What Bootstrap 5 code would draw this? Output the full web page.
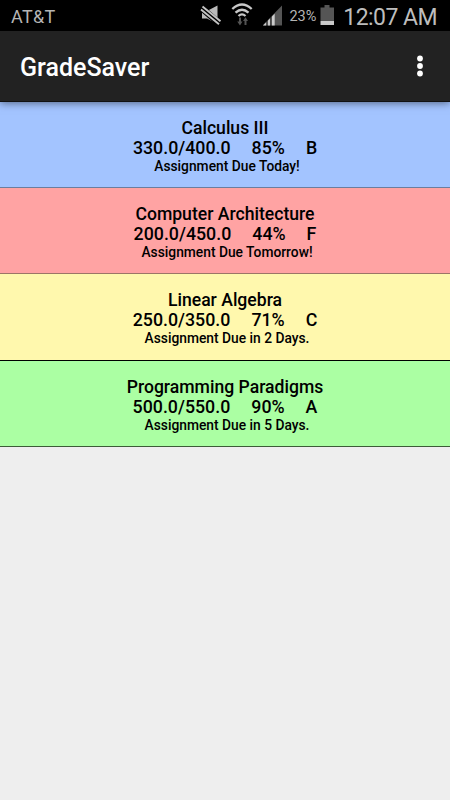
<!DOCTYPE html>
<html lang="en">
<head>
<meta charset="utf-8">
<meta name="viewport" content="width=device-width, initial-scale=1">
<title>GradeSaver</title>
<link href="https://cdn.jsdelivr.net/npm/bootstrap@5.3.0/dist/css/bootstrap.min.css" rel="stylesheet">
<style>
body{font-family:Roboto,"Liberation Sans",sans-serif;background:#eee;color:#000;height:800px;overflow:hidden}
.status{height:31px;background:#000;color:#b5b5b5;padding:0 13px 0 11px}
.carrier{font-size:18px;line-height:33px;letter-spacing:.3px}
.pct{font-size:14.5px;line-height:34px;margin-left:7px}
.clock{font-size:23px;line-height:35px;margin-left:9px;color:#bebebe;letter-spacing:-.55px}
.appbar{height:71px;background:#222;border-bottom:1px solid #111;padding:2px 12px 0 20px;box-shadow:0 1px 8px rgba(0,0,0,.5);z-index:2}
.title{font-size:25px;font-weight:500;color:#fff;padding-top:2px}
.course{border:0;border-bottom:1px solid;padding:16px 0 0;height:86px;background:none;color:#000;font-weight:500}
.course.c1{height:86px;background:#a3c4ff;border-color:#6b7e9f}
.course.c2{background:#ffa3a3;border-color:#9c7566}
.course.c3{height:87px;background:#fff8ad;border-color:#000}
.course.c4{background:#abffa3;border-color:#3c5c38}
.cname{font-size:17.600px;line-height:20px}
.score{font-size:17.800px;line-height:20px;gap:21px}
.due{font-size:13.800px;line-height:17px;padding-left:4px}
</style>
</head>
<body>
<header class="status d-flex align-items-start">
  <span class="carrier me-auto">AT&amp;T</span>
  <svg width="22" height="31" viewBox="200 0 22 31"><path d="M202 11h5l10.500-5.500v18.500L207 18.500h-5z" fill="#bbb"/><path d="M202 8.500l18 15.500" stroke="#000" stroke-width="6.500"/><path d="M201 9l18 14.800M202.500 6l18 14.800" transform="translate(0 .5)" stroke="#c4c4c4" stroke-width="1.900"/></svg>
  <svg width="41" height="31" viewBox="222 0 41 31"><g fill="none" stroke="#c8c8c8" stroke-width="2.300"><path d="M232.300 9q9.700-9 19.400 0M235.500 12.700q6.500-6 13 0M238.500 16q3.500-3.200 7 0"/></g><g fill="#555"><path d="M239 17.500h2v4h1.500l-2.500 4-2.800-4h1.800zM244.500 25v-4H243l2.500-3.800 2.500 3.800h-1.500v4z"/></g></svg>
  <svg width="19" height="31" viewBox="263 0 19 31"><path d="M262.500 25.500L282 5.500v20z" fill="#555"/><path d="M263 25.500l3.500-3.500v3.500zM267.500 21l2.800-2.800v7.300h-2.800zM271.500 17l3.200-3.200v11.700h-3.200z" fill="#ccc"/><path d="M267 20v6M271 16v10" stroke="#000" stroke-width=".8"/></svg>
  <span class="pct">23%</span>
  <svg class="ms-1" width="14" height="31" viewBox="320.500 0 14 31"><path d="M325 5h5v2.500h4.500V21H321V7.500h4z" fill="#555"/><path d="M321 21h13.500v4H321z" fill="#ccc"/></svg>
  <span class="clock">12:07 AM</span>
</header>
<nav class="appbar d-flex align-items-center justify-content-between position-relative">
  <span class="title">GradeSaver</span>
  <svg width="36" height="36" viewBox="0 0 36 36" fill="#fff" role="button" aria-label="More options"><circle cx="18" cy="9.500" r="2.900"/><circle cx="18" cy="17" r="2.900"/><circle cx="18" cy="24.500" r="2.900"/></svg>
</nav>
<main class="text-center">
  <section class="course c1"><div class="cname">Calculus III</div><div class="score d-flex justify-content-center"><span>330.0/400.0</span><span>85%</span><span>B</span></div><div class="due">Assignment Due Today!</div></section>
  <section class="course c2"><div class="cname">Computer Architecture</div><div class="score d-flex justify-content-center"><span>200.0/450.0</span><span>44%</span><span>F</span></div><div class="due">Assignment Due Tomorrow!</div></section>
  <section class="course c3"><div class="cname">Linear Algebra</div><div class="score d-flex justify-content-center"><span>250.0/350.0</span><span>71%</span><span>C</span></div><div class="due">Assignment Due in 2 Days.</div></section>
  <section class="course c4"><div class="cname">Programming Paradigms</div><div class="score d-flex justify-content-center"><span>500.0/550.0</span><span>90%</span><span>A</span></div><div class="due">Assignment Due in 5 Days.</div></section>
</main>
<script src="https://cdn.jsdelivr.net/npm/bootstrap@5.3.0/dist/js/bootstrap.bundle.min.js"></script>
</body>
</html>
